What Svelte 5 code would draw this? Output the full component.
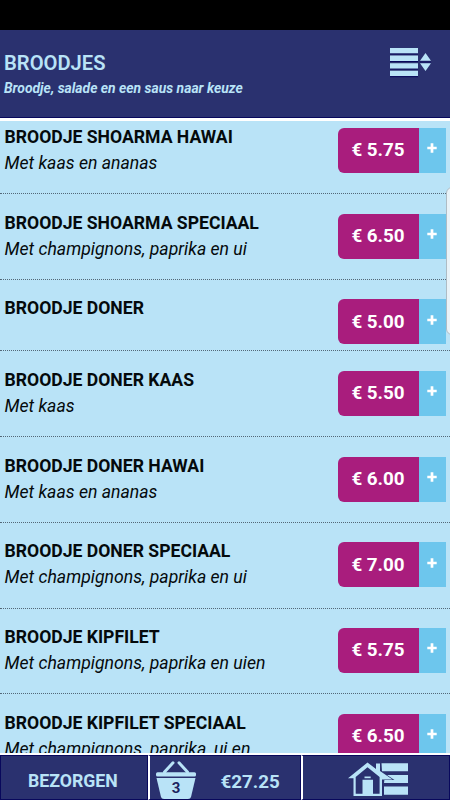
<script>
  const items = [
    { name: 'BROODJE SHOARMA HAWAI', note: 'Met kaas en ananas', price: '5.75' },
    { name: 'BROODJE SHOARMA SPECIAAL', note: 'Met champignons, paprika en ui', price: '6.50' },
    { name: 'BROODJE DONER', note: '', price: '5.00' },
    { name: 'BROODJE DONER KAAS', note: 'Met kaas', price: '5.50' },
    { name: 'BROODJE DONER HAWAI', note: 'Met kaas en ananas', price: '6.00' },
    { name: 'BROODJE DONER SPECIAAL', note: 'Met champignons, paprika en ui', price: '7.00' },
    { name: 'BROODJE KIPFILET', note: 'Met champignons, paprika en uien', price: '5.75' },
    { name: 'BROODJE KIPFILET SPECIAAL', note: 'Met champignons, paprika, ui en', price: '6.50' }
  ];
</script>

<div class="app">
  <div class="status"></div>
  <header>
    <div class="heading">
      <h1>BROODJES</h1>
      <p>Broodje, salade en een saus naar keuze</p>
    </div>
    <svg class="sort" width="44" height="32" viewBox="0 0 44 32">
      <g fill="none" stroke="#08085c" stroke-width="1">
        <path d="M2 7h28M2 14.500h28M2 22h28M2 29.700h28M32 15h11" />
      </g>
      <g fill="#b9e3f7">
        <path d="M2 1h28v5.300H2zM2 8.600h28v5.300H2zM2 16.200h28v5.300H2zM2 23.800h28v5.300H2z" />
        <path d="M32 13.700L37.500 6l5.500 7.700zM32 16.200h11l-5.500 7.900z" />
      </g>
    </svg>
  </header>

  <main>
    <div class="list">
      {#each items as item}
        <div class="row" class:short={!item.note}>
          <div class="text">
            <div class="name">{item.name}</div>
            {#if item.note}<div class="note">{item.note}</div>{/if}
          </div>
          <div class="buy">
            <button class="price">€ {item.price}</button>
            <button class="plus" aria-label="+">
              <svg width="10" height="10" viewBox="0 0 10 10"><path d="M5 .3v9.400M.3 5h9.400" stroke="#fff" stroke-width="2.700" /></svg>
            </button>
          </div>
        </div>
      {/each}
    </div>
    <div class="handle"></div>
  </main>

  <footer>
    <div class="cell mode"><span>BEZORGEN</span></div>
    <div class="cell cart">
      <div class="basket">
        <svg width="42" height="40" viewBox="0 0 42 40">
          <path d="M9.500 12L18 2.800M32.500 12L24 2.800" stroke="#b9e3f7" stroke-width="3" stroke-linecap="round" />
          <rect x="1" y="12.200" width="40" height="4.300" rx="1.500" fill="#b9e3f7" />
          <path d="M1.500 18h39l-4.500 19q-.5 2-3 2H9q-2.500 0-3-2z" fill="#b9e3f7" />
        </svg>
        <span class="count">3</span>
      </div>
      <span class="total">€27.25</span>
    </div>
    <div class="cell home">
      <svg width="62" height="36" viewBox="0 0 62 36">
        <path d="M34.500 2.300H61v8H35zM38 14h23v8H37zM37 25.500h24v8.300H37z" fill="#b9e3f7" />
        <path d="M20.500 1.500L1 17.300h5.500V35H35V18.500h10.500L33 10V2.500h-4v5.500z" fill="#b9e3f7" stroke="#2a316f" stroke-width="1.200" paint-order="stroke" />
        <path d="M20.500 6.300L8.700 16v16.800h6.800v-14h10.500v14h6.600V16z" fill="#2a316f" />
        <path d="M17.500 15.500h6.200v1.700h-6.200z" fill="#b9e3f7" />
      </svg>
    </div>
  </footer>
</div>

<style>
  :global(body) { margin: 0; background: #000; }
  .app {
    width: 450px; height: 800px; overflow: hidden;
    display: flex; flex-direction: column;
    background: #b9e3f7;
    font-family: Roboto, "Liberation Sans", sans-serif;
  }
  .status { height: 30px; flex: none; background: #000; }
  header {
    height: 88px; flex: none; box-sizing: border-box;
    display: flex; justify-content: space-between; align-items: flex-start;
    padding: 17px 18px 0 4px;
    background: #2a316f; color: #b9e3f7;
    border-bottom: 1px solid #08085c;
    box-shadow: 0 3px 0 #fff;
    position: relative; z-index: 1;
  }
  h1 { margin: 3px 0 0; font-size: 20.200px; line-height: 26px; font-weight: 600; }
  header p { margin: 3px 0 0; font-size: 13.900px; line-height: 18px; font-style: italic; font-weight: 700; white-space: nowrap; }
  .sort { display: block; }
  main { flex: 1; min-height: 0; overflow: hidden; position: relative; }
  .list { margin-top: -9.500px; }
  .row {
    height: 85.700px; box-sizing: border-box;
    display: flex; justify-content: space-between; align-items: flex-start;
    padding: 0 4px 0 4.500px;
    border-bottom: 1px dotted #536878;
  }
  .row.short { height: 71.600px; }
  .text { padding-top: 15.400px; white-space: nowrap; }
  .name { font-size: 17.600px; line-height: 26px; font-weight: 700; color: #050a0c; }
  .note { font-size: 17.650px; line-height: 26px; font-style: italic; color: #050a0c; }
  .buy { display: flex; margin-top: 19.400px; height: 45px; }
  button { border: 0; padding: 0; font-family: inherit; }
  .price {
    width: 81px; border-radius: 6px 0 0 6px; padding-right: 1px;
    background: #a91d7d; color: #fff; font-size: 18.800px; font-weight: 700;
  }
  .plus { width: 27px; background: #6dc6ed; display: flex; justify-content: center; align-items: flex-start; padding: 15.500px 1px 0 0; }
  .handle {
    position: absolute; right: -8px; top: 69px; width: 12px; height: 148px;
    box-sizing: border-box; border: 1px solid #aebcc4; border-radius: 6px;
    background: #e9f3f8;
  }
  footer {
    height: 47px; flex: none; box-sizing: border-box;
    display: flex; border-top: 2px solid #fff;
    background: #2a316f; color: #b9e3f7;
  }
  .cell { box-sizing: border-box; display: flex; align-items: center; border: 1px solid #08085c; }
  .mode { width: 148px; padding: 6px 0 0 27px; font-size: 17.700px; font-weight: 700; }
  .cart { width: 153px; border-left: 2px solid #fff; padding: 4px 0 0 5px; font-size: 18.800px; font-weight: 700; }
  .home { flex: 1; border-left: 2px solid #fff; padding: 3px 0 0 44px; }
  .basket { position: relative; height: 40px; width: 42px; }
  .basket svg, .home svg { display: block; }
  .count {
    position: absolute; left: 0; right: 0; top: 18px; text-align: center;
    font-size: 15px; line-height: 20px; font-weight: 700; color: #1d2360;
  }
  .total { margin: 4px 0 0 23.500px; }
</style>
